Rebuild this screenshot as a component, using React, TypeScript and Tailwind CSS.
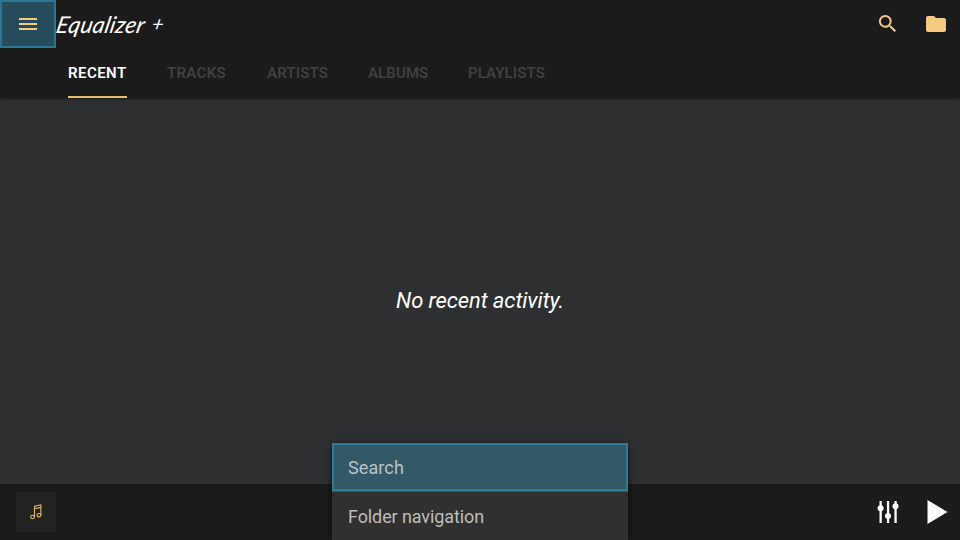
import { clsx } from "clsx";

const tabs = [
  { label: "RECENT", style: "w-[59px] tracking-[0.45px]" },
  { label: "TRACKS", style: "w-[60px] tracking-[0.3px]" },
  { label: "ARTISTS", style: "w-[61px] tracking-[0.15px]" },
  { label: "ALBUMS", style: "w-[60px] tracking-[0.1px]" },
  { label: "PLAYLISTS", style: "w-[78px] tracking-[0.1px]" },
];

function Header() {
  return (
    <header className="flex h-12 items-center">
      <button aria-label="Menu" className="flex h-12 w-14 items-center justify-center border-2 border-[#2b7894] bg-[#264b5a]">
        <svg width="18" height="12" viewBox="0 0 18 12" fill="#f4ca82">
          <path d="M0 0h18v2H0zM0 5h18v2H0zM0 10h18v2H0z" />
        </svg>
      </button>
      <h1 className="flex w-[110px] -skew-x-12 gap-[7px] pl-px whitespace-nowrap font-['Lato',sans-serif] text-[23px] leading-[44px] text-white italic">
        <span className="tracking-[0.2px]">Equalizer</span>
        <span className="text-[20px] leading-[43px]">+</span>
      </h1>
      <div className="ml-auto flex items-center gap-6 pr-3">
        <svg width="24" height="24" viewBox="0 0 24.500 24.500" fill="#f4ca82">
          <path d="M15.500 14h-.79l-.28-.27A6.470 6.470 0 0 0 16 9.500 6.500 6.500 0 1 0 9.500 16c1.610 0 3.090-.59 4.230-1.570l.27.28v.79l5 4.990L20.490 19l-4.990-5zm-6 0a4.500 4.500 0 1 1 0-9 4.500 4.500 0 0 1 0 9z" />
        </svg>
        <svg width="24" height="24" viewBox="0 0 24 24" fill="#f4ca82">
          <path d="M10 4H4c-1.100 0-1.990.9-1.990 2L2 18c0 1.100.9 2 2 2h16c1.100 0 2-.9 2-2V8c0-1.100-.9-2-2-2h-8l-2-2z" />
        </svg>
      </div>
    </header>
  );
}

function Tabs() {
  return (
    <nav className="flex h-[50px] gap-10 pl-[68px] text-[15px] font-semibold">
      {tabs.map((tab, i) => (
        <div
          key={tab.label}
          className={clsx(
            "h-[50px] shrink-0 whitespace-nowrap leading-[50px]",
            tab.style,
            i === 0 ? "border-b-2 border-[#e6bd72] text-white" : "text-[#414141]",
          )}
        >
          {tab.label}
        </div>
      ))}
    </nav>
  );
}

function Player() {
  return (
    <footer className="flex h-14 items-center bg-[#1b1b1b] pr-3 pl-4">
      <div className="flex h-10 w-10 items-center justify-center bg-[#222222]">
        <svg width="14" height="18" viewBox="0 0 14 18" fill="none" stroke="#e6b665" strokeWidth="1.100">
          <ellipse cx="3.500" cy="14" rx="1.900" ry="1.700" />
          <ellipse cx="9.900" cy="12.200" rx="1.900" ry="1.700" />
          <path d="M5.500 14V3.300l6.400-1.300v10.200M5.500 5.700l6.400-1.300" />
        </svg>
      </div>
      <div className="ml-auto flex items-center gap-6">
        <svg width="24" height="24" viewBox="0 0 24 24" fill="#fff">
          <path d="M3.500 1h2.300v22H3.500zM10.900 1h2.300v22h-2.300zM18.400 1h2.300v22h-2.300z" />
          <circle cx="4.600" cy="8.200" r="3" />
          <circle cx="12" cy="16" r="3" />
          <circle cx="19.500" cy="6.300" r="3" />
        </svg>
        <svg width="24" height="24" viewBox="0 0 24 24" fill="#fff">
          <path d="M3.500 0 23.500 12 3.500 24z" />
        </svg>
      </div>
    </footer>
  );
}

function OptionsMenu() {
  return (
    <div className="absolute top-[443px] left-[332px] h-[97px] w-[296px] bg-[#303030] text-[18px] shadow-[0_2px_8px_rgba(0,0,0,0.55)]">
      <div className="h-12 border-2 border-[#307b96] bg-[#335866] pl-[14px] leading-[45px] tracking-[0.1px] text-[#b7c3c9]">
        Search
      </div>
      <div className="h-[49px] border-t border-[#515151] pl-4 leading-[49px] tracking-[-0.1px] text-[#bdbdbd]">
        Folder navigation
      </div>
    </div>
  );
}

export default function App() {
  return (
    <div className="relative flex h-[540px] w-[960px] flex-col overflow-hidden bg-[#2e2f31] font-['Roboto',sans-serif]">
      <div className="z-10 h-[98px] bg-[#1b1b1b] shadow-[0_1px_2px_rgba(0,0,0,0.5)]">
        <Header />
        <Tabs />
      </div>
      <main className="flex flex-1 items-center justify-center pt-5">
        <p className="text-[22px] leading-7 tracking-[-0.1px] text-white italic">No recent activity.</p>
      </main>
      <Player />
      <OptionsMenu />
    </div>
  );
}
